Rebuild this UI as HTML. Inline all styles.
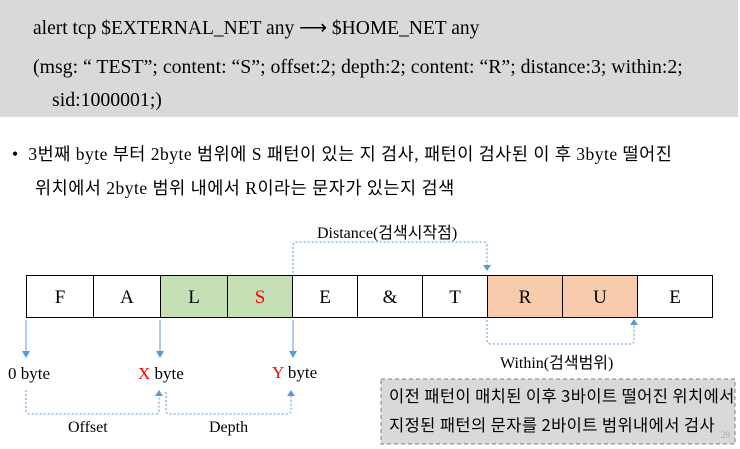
<!DOCTYPE html>
<html><head><meta charset="utf-8"><style>
body{margin:0;width:740px;height:449px;background:#fff;position:relative;overflow:hidden;font-family:"Liberation Serif","Noto Serif CJK SC",serif;color:#000}
.a{position:absolute;white-space:nowrap}
.g{position:absolute;left:0;top:0;width:738px;height:117px;background:#d9d9d9}
.k{font-family:"Liberation Serif","Noto Sans CJK KR",serif;font-size:17.5px;letter-spacing:0.5px}
.c{position:absolute;top:275px;height:43px;border:1px solid #000;box-sizing:border-box;text-align:center;line-height:44px;font-size:19px}
.s{font-family:'Noto Sans CJK KR',sans-serif;font-size:16.5px;letter-spacing:0.4px}
</style></head><body>
<div class="g"></div>
<div class="a" style="left:33px;top:16px;font-size:19.5px">alert tcp $EXTERNAL_NET any ⟶ $HOME_NET any</div>
<div class="a" style="left:33px;top:56px;font-size:19.8px">(msg: “ TEST”; content: “S”; offset:2; depth:2; content: “R”; distance:3; within:2;</div>
<div class="a" style="left:52px;top:89px;font-size:19.8px">sid:1000001;)</div>
<div class="a k" style="left:12px;top:141px">•&nbsp;&nbsp;3번째 byte 부터 2byte 범위에 S 패턴이 있는 지 검사, 패턴이 검사된 이 후 3byte 떨어진</div>
<div class="a k" style="left:35px;top:175px">위치에서 2byte 범위 내에서 R이라는 문자가 있는지 검색</div>
<div class="c" style="left:26px;width:68px">F</div>
<div class="c" style="left:93px;width:68px">A</div>
<div class="c" style="left:160px;width:68px;background:#c5e0b4">L</div>
<div class="c" style="left:227px;width:66px;background:#c5e0b4;color:#f00">S</div>
<div class="c" style="left:292px;width:66px">E</div>
<div class="c" style="left:357px;width:66px">&amp;</div>
<div class="c" style="left:422px;width:66px">T</div>
<div class="c" style="left:487px;width:76px;background:#f8cbad">R</div>
<div class="c" style="left:562px;width:76px;background:#f8cbad">U</div>
<div class="c" style="left:637px;width:76px">E</div>
<svg class="a" style="left:0;top:0" width="740" height="449">
<g fill="none" stroke="#5b9bd5" stroke-width="1">
<path d="M293 273V246Q293 242 297 242H483Q487 242 487 246V266" stroke-dasharray="2 2"/>
<path d="M487 320V340Q487 344 491 344H630Q634 344 634 340V324" stroke-dasharray="2 2"/>
<path d="M26 320V352"/><path d="M160 320V352"/><path d="M293 320V352"/>
<path d="M26 390V410Q26 414 30 414H155Q159 414 159 410V396" stroke-dasharray="2 2"/>
<path d="M166 392V410Q166 414 170 414H287Q291 414 291 410V396" stroke-dasharray="2 2"/>
</g>
<g fill="#5b9bd5">
<path d="M483 265h8l-4 6z"/><path d="M630 325h8l-4-6z"/>
<path d="M22 351h8l-4 7z"/><path d="M156 351h8l-4 7z"/><path d="M289 351h8l-4 7z"/>
<path d="M155 396h8l-4-6z"/><path d="M287 396h8l-4-6z"/>
</g>
<rect x="381" y="379" width="354" height="65" fill="#d9d9d9" stroke="#7f7f7f" stroke-dasharray="4 3"/>
</svg>
<div class="a k" style="left:317px;top:219px;font-size:16px;letter-spacing:0">Distance(검색시작점)</div>
<div class="a k" style="left:500px;top:349px;font-size:16px;letter-spacing:0">Within(검색범위)</div>
<div class="a" style="left:8px;top:364px;font-size:17px">0 byte</div>
<div class="a" style="left:138px;top:364px;font-size:17px"><span style="color:#f00">X</span> byte</div>
<div class="a" style="left:272px;top:363px;font-size:17px"><span style="color:#f00">Y</span> byte</div>
<div class="a" style="left:68px;top:419px;font-size:16px">Offset</div>
<div class="a" style="left:209px;top:419px;font-size:16px">Depth</div>
<div class="a s" style="left:389px;top:383px">이전 패턴이 매치된 이후 3바이트 떨어진 위치에서</div>
<div class="a s" style="left:389px;top:412px">지정된 패턴의 문자를 2바이트 범위내에서 검사</div>
<div class="a" style="left:721px;top:430px;font-size:9px;color:#aaa">29</div>
</body></html>
